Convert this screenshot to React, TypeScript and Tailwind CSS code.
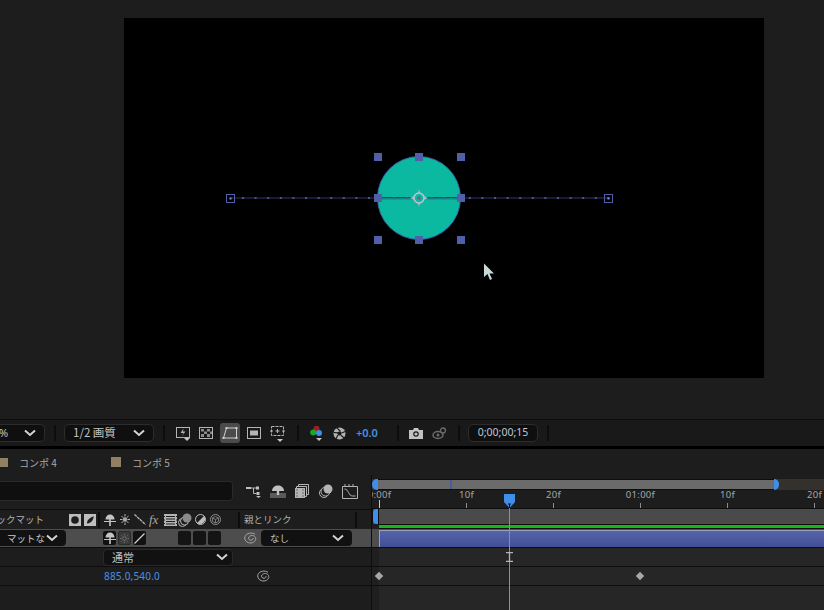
import type { ReactNode } from 'react';

const jp = "font-['Noto_Sans_CJK_JP','Noto_Sans',sans-serif]";

function Chevron({ className = '' }: { className?: string }) {
    return (
        <svg viewBox="0 0 12 8" className={`w-[12px] h-[8px] ${className}`} fill="none" stroke="#d4d4d4" strokeWidth="2">
            <path d="M1 1.5 6 6l5-4.5" />
        </svg>
    );
}

function Sep({ className = '' }: { className?: string }) {
    return <div className={`w-[2px] h-[16px] bg-[#0d0d0d] shrink-0 ${className}`} />;
}

function Icon({ w, h, children, className = '' }: { w: number; h: number; children: ReactNode; className?: string }) {
    return (
        <svg width={w} height={h} viewBox={`0 0 ${w} ${h}`} className={`shrink-0 ${className}`} fill="none" stroke="#b4b4b4">
            {children}
        </svg>
    );
}

function Spiral({ className = '' }: { className?: string }) {
    return (
        <Icon w={13} h={12} className={className}>
            <path d="M11 2.200C8 .3 2.500 .8 1 4.500c-1.200 3.500 2 6.800 6 6.500 3.500-.3 5.500-3 4.500-5.500C10.500 3 6.500 2.800 4.800 5c-1 1.800.5 3.500 2.500 3.200 1.300-.2 2-1.200 1.700-2.200" stroke="#a8a8a8" strokeWidth="1" />
        </Icon>
    );
}

function Caret() {
    return <path d="M0 0h6L3 3z" fill="#c8c8c8" stroke="none" />;
}

function Toolbar() {
    return (
        <div className="h-[26px] bg-[#191919] flex items-center shrink-0 text-[#c4c4c4]">
            <div className="w-[45px] h-[18px] rounded-r-[5px] bg-[#0f0f0f] border border-l-0 border-[#2c2c2c] flex items-center justify-between pr-[8px] text-[11px]">
                <span className="font-['Noto_Sans',sans-serif] -ml-[1px]">%</span>
                <Chevron />
            </div>
            <Sep className="ml-[9px]" />
            <div className={`w-[90px] h-[18px] ml-[8px] rounded-[5px] bg-[#0f0f0f] border border-[#2c2c2c] flex items-center justify-between pl-[8px] pr-[8px] text-[11.5px] whitespace-nowrap ${jp}`}>
                <span>1/2 画質</span>
                <Chevron />
            </div>
            <Sep className="ml-[9px]" />
            <Icon w={16} h={16} className="ml-[10px]">
                <rect x="1.500" y="2.500" width="13" height="10" />
                <path d="M8.500 3.500 5.500 8h3l-2 3.500 4-5H8z" fill="#b4b4b4" stroke="none" />
                <g transform="translate(9 13)"><Caret /></g>
            </Icon>
            <Icon w={14} h={13} className="ml-[8px]">
                <rect x=".5" y=".5" width="13" height="11" />
                <path d="M2 2h3v2.500H2zM8 2h3v2.500H8zM5 4.500h3V7H5zM11 4.500h2V7h-2zM2 7h3v3H2zM8 7h3v3H8z" fill="#8c8c8c" stroke="none" />
            </Icon>
            <div className="w-[20px] h-[20px] ml-[7px] rounded-[3px] bg-[#4b4b4b] flex items-center justify-center">
                <Icon w={16} h={14}>
                    <path d="M4.500 2H14.500V12H1.500z" stroke="#cfcfcf" />
                    <path d="M3.500 1h2v2h-2zM13.500 1h2v2h-2zM.5 11h2v2h-2zM13.500 11h2v2h-2z" fill="#cfcfcf" stroke="none" />
                </Icon>
            </div>
            <Icon w={14} h={12} className="ml-[7px]">
                <rect x=".5" y=".5" width="13" height="11" />
                <rect x="3" y="3.500" width="8" height="5" fill="#b4b4b4" stroke="none" />
            </Icon>
            <Icon w={15} h={17} className="ml-[9px]">
                <rect x="1.500" y="1.500" width="12" height="9" strokeDasharray="3 1" />
                <path d="M7.500 4v4M5.500 6h4M0 6h3M12 6h3" />
                <g transform="translate(7 14)"><Caret /></g>
            </Icon>
            <Sep className="ml-[12px]" />
            <Icon w={13} h={16} className="ml-[11px]">
                <circle cx="6.500" cy="3.800" r="3" fill="#a01d1d" stroke="none" />
                <circle cx="3.200" cy="7.500" r="3" fill="#18a82a" stroke="none" />
                <circle cx="9" cy="8" r="3" fill="#3d8fe0" stroke="none" />
                <g transform="translate(6 13)"><Caret /></g>
            </Icon>
            <Icon w={13} h={13} className="ml-[10px]">
                <circle cx="6.500" cy="6.500" r="6" fill="#b4b4b4" stroke="none" />
                <path d="M4 .8 7.500 4.500M12.300 4.500 8.500 6M11 10.800 7.800 8.300M3 11.700 5 8M.6 5.500 5 5.800" stroke="#191919" strokeWidth="1.200" />
                <circle cx="6.500" cy="6.500" r="2" fill="#191919" stroke="none" />
            </Icon>
            <span className="ml-[10px] w-[21px] whitespace-nowrap text-[11px] font-semibold text-[#4a90e2] font-['Noto_Sans',sans-serif]">+0.0</span>
            <Sep className="ml-[20px]" />
            <Icon w={14} h={11} className="ml-[10px]">
                <path d="M0 2h4l1-2h4l1 2h4v9H0z" fill="#c2c2c2" stroke="none" />
                <circle cx="7" cy="6" r="2.200" fill="#c2c2c2" stroke="#191919" strokeWidth="1.200" />
            </Icon>
            <Icon w={15} h={13} className="ml-[9px]">
                <ellipse cx="6" cy="8" rx="5" ry="3.500" stroke="#6b6b6b" strokeWidth="1.500" />
                <circle cx="6" cy="8" r="1.500" fill="#6b6b6b" stroke="none" />
                <circle cx="11" cy="3.500" r="2.500" stroke="#6b6b6b" strokeWidth="1.300" />
            </Icon>
            <Sep className="ml-[11px]" />
            <div className="w-[70px] h-[18px] ml-[8px] rounded-[5px] bg-[#0f0f0f] border border-[#2c2c2c] flex items-center justify-center text-[10.500px] text-[#bfc6d6] font-['Noto_Sans',sans-serif]">
                0;00;00;15
            </div>
            <Sep className="ml-[9px]" />
        </div>
    );
}

function Tabs() {
    return (
        <div className={`h-[26px] flex items-center text-[10px] text-[#a8a8a8] shrink-0 ${jp}`}>
            <div className="w-[8px] h-[9px] bg-[#8f7f63]" />
            <span className="ml-[11px] w-[37px] whitespace-nowrap">コンポ 4</span>
            <div className="w-[10px] h-[10px] ml-[55px] bg-[#8f7f63]" />
            <span className="ml-[11px] whitespace-nowrap">コンポ 5</span>
        </div>
    );
}

function SearchRow() {
    return (
        <div className="h-[34px] pb-[2px] flex items-center shrink-0">
            <div className="w-[233px] h-[20px] rounded-r-[4px] bg-[#0f0f0f] border border-l-0 border-[#2a2a2a]" />
            <Icon w={16} h={14} className="ml-[13px]">
                <path d="M0 3h5v2H0z" fill="#c0c0c0" stroke="none" />
                <path d="M5 4h5M7.500 4v5.500h3" />
                <path d="M10 2.500h3v3h-3zM10.500 8h3v3h-3z" fill="#c0c0c0" stroke="none" />
                <g transform="translate(10 12)"><path d="M0 0h5L2.500 2z" fill="#c0c0c0" stroke="none" /></g>
            </Icon>
            <Icon w={16} h={13} className="ml-[8px]">
                <path d="M2 6C2 2.500 5 .5 8 .5S14 2.500 14 6z" fill="#c0c0c0" stroke="none" />
                <path d="M6.800 6h2.400v3H6.800z" fill="#c0c0c0" stroke="none" />
                <path d="M0 8h16v5H0z" fill="#5a5a5a" stroke="none" />
                <path d="M6.800 8h2.400v2H6.800z" fill="#c0c0c0" stroke="none" />
            </Icon>
            <Icon w={14} h={14} className="ml-[9px]">
                <path d="M3.500 2.500V.5h10v10h-2" />
                <path d="M1.500 4.500V2.500h10v10h-2" />
                <rect x="0" y="4" width="10" height="10" fill="#b4b4b4" stroke="none" />
                <path d="M1.500 5.500h1v1h-1zM1.500 8.500h1v1h-1zM1.500 11.500h1v1h-1zM7.500 5.500h1v1h-1zM7.500 8.500h1v1h-1zM7.500 11.500h1v1h-1z" fill="#1d1d1d" stroke="none" />
            </Icon>
            <Icon w={14} h={14} className="ml-[10px]">
                <circle cx="5" cy="9" r="4.500" />
                <circle cx="6.500" cy="7.500" r="4.500" fill="#1d1d1d" />
                <circle cx="9" cy="5" r="4.500" fill="#b4b4b4" stroke="none" />
            </Icon>
            <Icon w={16} h={15} className="ml-[9px]">
                <path d="M.5 2.500h15v12H.5z" />
                <path d="M3 0v2.500M7 0v2.500M11 0v2.500" />
                <path d="M2.500 5c4 0 4 7 8 7h3" />
            </Icon>
        </div>
    );
}

function ShyIcon({ className = '' }: { className?: string }) {
    return (
        <Icon w={12} h={12} className={className}>
            <path d="M1.500 5.500C1.500 2.500 3.500 .5 6 .5s4.500 2 4.500 5z" fill="#c4c4c4" stroke="none" />
            <path d="M5.200 5h1.600v7H5.200z" fill="#c4c4c4" stroke="none" />
            <path d="M0 7.500h12" stroke="#c4c4c4" />
        </Icon>
    );
}

function HeaderIcons() {
    return (
        <>
            <Icon w={12} h={12} className="ml-[25px]">
                <rect width="12" height="12" fill="#bdbdbd" stroke="none" />
                <circle cx="6" cy="6" r="3.800" fill="#1d1d1d" stroke="none" />
            </Icon>
            <Icon w={12} h={12} className="ml-[3px]">
                <rect width="12" height="12" fill="#bdbdbd" stroke="none" />
                <path d="M3 9.500C3 5.500 6.500 3 10 2.500 9 5 8.500 9 3 9.500z" fill="#1d1d1d" stroke="none" />
            </Icon>
            <Sep className="ml-[2px] h-[12px]" />
            <ShyIcon className="ml-[4px]" />
            <Icon w={10} h={11} className="ml-[4px]">
                <circle cx="5" cy="5.500" r="2.200" fill="#a8a8a8" stroke="none" />
                <path d="M5 0v2.500M5 8.500V11M0 5.500h2.500M7.500 5.500H10M1.500 2l1.800 1.800M8.500 2 6.700 3.800M1.500 9l1.800-1.800M8.500 9 6.700 7.200" />
            </Icon>
            <Icon w={12} h={11} className="ml-[4px]">
                <path d="M.5 .5 11.500 10.500" strokeWidth="1.300" strokeDasharray="3 .6" />
            </Icon>
            <span className="ml-[3px] w-[12px] text-[13px] leading-none italic text-[#a8a8a8] font-['Liberation_Serif',serif]">fx</span>
            <Icon w={13} h={12} className="ml-[3px]">
                <rect width="13" height="12" fill="#b4b4b4" stroke="none" />
                <path d="M2 2.500h9M2 5h9M2 7.500h9M2 10h9" stroke="#1d1d1d" />
                <path d="M0 2.500h1M12 2.500h1M0 6h1M12 6h1M0 9.500h1M12 9.500h1" stroke="#1d1d1d" />
            </Icon>
            <Icon w={14} h={14} className="ml-[1px]">
                <circle cx="4.500" cy="9.500" r="4" />
                <circle cx="6.500" cy="8" r="4" fill="#1d1d1d" />
                <circle cx="9" cy="5" r="4.500" fill="#8a8a8a" stroke="none" />
            </Icon>
            <Icon w={11} h={11} className="ml-[3px]">
                <circle cx="5.500" cy="5.500" r="5" fill="#1d1d1d" stroke="#bdbdbd" />
                <path d="M9 2 2 9a5 5 0 0 0 7-7z" fill="#bdbdbd" stroke="none" />
            </Icon>
            <Icon w={11} h={11} className="ml-[4px]">
                <circle cx="5.500" cy="5.500" r="5" stroke="#8f8f8f" />
                <path d="M2.500 4 5.500 2.500 8.500 4 5.500 5.500zM2.500 4v3.500l3 1.500 3-1.500V4M5.500 5.500V9" stroke="#8f8f8f" strokeWidth=".8" />
            </Icon>
        </>
    );
}

function LeftColumn() {
    return (
        <div className="w-[371px] shrink-0 flex flex-col">
            <SearchRow />
            <div className="h-[1px] bg-[#0d0d0d]" />
            <div className={`h-[19px] flex items-center text-[9.500px] text-[#b0b0b0] ${jp}`}>
                <span className="w-[44px] flex justify-end overflow-hidden whitespace-nowrap"><span className="shrink-0">ックマット</span></span>
                <HeaderIcons />
                <Sep className="ml-[17px] h-[12px]" />
                <span className="ml-[4px] w-[47px] whitespace-nowrap">親とリンク</span>
                <Sep className="ml-[64px] h-[12px]" />
            </div>
            <div className="h-[18px] bg-[#4d4d4d] flex items-center">
                <div className={`w-[66px] h-[16px] rounded-r-[4px] bg-[#111111] flex items-center justify-between pl-[7px] pr-[8px] text-[9.500px] whitespace-nowrap text-[#c8c8c8] ${jp}`}>
                    <span>マットな</span>
                    <Chevron className="w-[10px]" />
                </div>
                <div className="ml-[37px] w-[13px] h-[14px] rounded-[2px] bg-[#111111] flex items-center justify-center">
                    <ShyIcon />
                </div>
                <div className="ml-[2px] w-[13px] h-[14px] rounded-[2px] bg-[#3a3a3a] border border-[#2a2a2a] flex items-center justify-center">
                    <Icon w={9} h={9}>
                        <circle cx="4.500" cy="4.500" r="1.800" stroke="#6e6e6e" />
                        <path d="M4.500 0v1.500M4.500 7.500V9M0 4.500h1.500M7.500 4.500H9M1.300 1.300l1 1M7.700 1.300l-1 1M1.300 7.700l1-1M7.700 7.700l-1-1" stroke="#6e6e6e" />
                    </Icon>
                </div>
                <div className="ml-[2px] w-[13px] h-[14px] rounded-[2px] bg-[#111111] flex items-center justify-center">
                    <Icon w={11} h={11}>
                        <path d="M.5 10.500 10.500 .5" stroke="#d0d0d0" strokeWidth="1.200" />
                    </Icon>
                </div>
                <div className="ml-[32px] w-[13px] h-[14px] rounded-[2px] bg-[#141414]" />
                <div className="ml-[2px] w-[13px] h-[14px] rounded-[2px] bg-[#141414]" />
                <div className="ml-[2px] w-[13px] h-[14px] rounded-[2px] bg-[#141414]" />
                <Spiral className="ml-[23px]" />
                <div className={`ml-[4px] w-[91px] h-[16px] rounded-[4px] bg-[#111111] flex items-center justify-between pl-[9px] pr-[8px] text-[9.500px] text-[#c8c8c8] ${jp}`}>
                    <span>なし</span>
                    <Chevron className="w-[10px]" />
                </div>
            </div>
            <div className="h-[1px] bg-[#0d0d0d]" />
            <div className="h-[18px] flex items-center pl-[103px]">
                <div className={`w-[130px] h-[17px] rounded-[4px] bg-[#111111] border border-[#2a2a2a] flex items-center justify-between pl-[8px] pr-[4px] text-[11px] text-[#c0c0c0] ${jp}`}>
                    <span>通常</span>
                    <Chevron className="w-[10px]" />
                </div>
            </div>
            <div className="h-[1px] bg-[#0d0d0d]" />
            <div className="h-[18px] flex items-center">
                <span className="ml-[104px] w-[59px] text-[10px] tracking-[0.2px] text-[#4a90e2] font-['Noto_Sans',sans-serif]">885.0,540.0</span>
                <Spiral className="ml-[94px]" />
            </div>
            <div className="h-[1px] bg-[#0d0d0d]" />
        </div>
    );
}

const ticks = ['0:00f', '10f', '20f', '01:00f', '10f', '20f'];

function Keyframe({ className = '' }: { className?: string }) {
    return <div className={`w-[6px] h-[6px] rotate-45 bg-[#a6a6a6] shrink-0 ${className}`} />;
}

function RightColumn() {
    return (
        <div className="flex-1 flex flex-col relative overflow-hidden bg-[#1d1d1d]">
            <div className="h-[4px] shrink-0" />
            {/* navigator */}
            <div className="h-[11px] flex items-stretch bg-[#34312d] shrink-0">
                <div className="w-[6px] bg-[#3f8fe8] rounded-l-[5px]" />
                <div className="w-[396px] bg-[#6b6b6b] border-y border-[#0d0d0d] flex">
                    <div className="ml-[72px] w-[2px] bg-[#4a5a9a]" />
                </div>
                <div className="w-[5px] bg-[#3f8fe8] rounded-r-[5px]" />
            </div>
            {/* ruler */}
            <div className="h-[18px] flex -ml-[36px] shrink-0 text-[9.500px] text-[#a6a6a6] font-['Noto_Sans',sans-serif]">
                {ticks.map((t, i) => (
                    <div key={i} className="w-[87px] shrink-0 flex flex-col items-center justify-between">
                        <span className="leading-[10px] tracking-[0.3px]">{t}</span>
                        <div className={`w-[1px] ${i === 0 ? 'h-[8px] bg-[#c8c8c8]' : 'h-[5px] bg-[#8c8c8c]'}`} />
                    </div>
                ))}
            </div>
            <div className="h-[1px] bg-[#0d0d0d] shrink-0" />
            {/* work area */}
            <div className="h-[15px] flex bg-[#4a4a4a] shrink-0">
                <div className="w-[1px] bg-[#0d0d0d]" />
                <div className="w-[5px] bg-[#3f8fe8] rounded-l-[4px]" />
                <div className="w-[1px] bg-[#0d0d0d]" />
            </div>
            <div className="h-[5px] flex shrink-0">
                <div className="w-[7px]" />
                <div className="flex-1 bg-[#18b41e] border-y border-[#0d0d0d]" />
            </div>
            <div className="h-[18px] flex bg-[#4d4d4d] pt-[1px] shrink-0">
                <div className="w-[7px]" />
                <div className="flex-1 bg-linear-to-b from-[#5563ab] to-[#424f97] border-l border-t border-[#9aa0b8]" />
            </div>
            <div className="h-[1px] bg-[#0d0d0d] shrink-0" />
            <div className="h-[18px] flex items-center bg-[#262626] shrink-0">
                <div className="w-[7px] h-full bg-[#1f1f1f]" />
            </div>
            <div className="h-[1px] bg-[#0d0d0d] shrink-0" />
            <div className="h-[18px] flex items-center bg-[#262626] shrink-0">
                <div className="w-[7px] h-full bg-[#1f1f1f]" />
                <Keyframe className="-ml-[3px]" />
                <Keyframe className="ml-[255px]" />
            </div>
            <div className="h-[1px] bg-[#0d0d0d] shrink-0" />
            <div className="flex-1 flex bg-[#262626]">
                <div className="w-[7px] bg-[#1f1f1f]" />
            </div>
            {/* playhead sits over the rows */}
            <div className="absolute left-[132px] top-[19px] bottom-0 w-[11px] flex flex-col items-center">
                <svg width="11" height="14" viewBox="0 0 11 14" className="shrink-0">
                    <path d="M0 0h11v8l-5.500 6L0 8z" fill="#3f8fe8" />
                    <path d="M4 10h3M5.500 10v4" stroke="#0d0d0d" />
                </svg>
                <div className="w-[1px] flex-1 bg-[#5f9bd8]" />
            </div>
            {/* mouse cursor */}
            <svg width="7" height="10" viewBox="0 0 7 10" className="absolute left-[134px] top-[77px]" fill="none" stroke="#b4b4b4">
                <path d="M0 .5h7M0 9.500h7M3.500 .5v9" strokeWidth="1.300" />
            </svg>
        </div>
    );
}

function CompViewer() {
    const handles = [
        [254, 139],
        [295, 139],
        [337, 139],
        [254, 180],
        [337, 180],
        [254, 222],
        [295, 222],
        [337, 222],
    ];
    const dots = Array.from({ length: 30 }, (_, i) => 118 + i * 12.6);
    return (
        <div className="h-[419px] shrink-0 pl-[124px] pt-[18px]">
            <svg width="640" height="360" viewBox="0 0 640 360" className="bg-black block">
                <circle cx="295" cy="180" r="41.500" fill="#0bb8a0" stroke="#3f5fa8" strokeWidth="1" />
                <path d="M106 180H484" stroke="#1a1a33" strokeWidth="2" />
                <path d="M254 180.500H336" stroke="#0a8a84" strokeWidth="2" />
                {dots.map((x) => (
                    <rect key={x} x={x} y="179" width="2" height="2" fill="#4a5590" />
                ))}
                <rect x="102.500" y="176.500" width="8" height="8" fill="none" stroke="#4f5fa8" />
                <rect x="105.500" y="179.500" width="2" height="2" fill="#7f8fd0" />
                <rect x="480.500" y="176.500" width="8" height="8" fill="none" stroke="#4f5fa8" />
                <rect x="483.500" y="179.500" width="2" height="2" fill="#7f8fd0" />
                {handles.map(([x, y]) => (
                    <rect key={`${x}-${y}`} x={x - 4} y={y - 4} width="8" height="8" fill="#4f5fa8" />
                ))}
                <path d="M295 171l1.500 5 7.500 4-7.500 4-1.500 5-1.500-5-7.500-4 7.500-4z" fill="#a8acbc" />
                <circle cx="295" cy="180" r="5" fill="#0bb8a0" stroke="#c4c6d2" strokeWidth="1.400" />
                <circle cx="295" cy="180" r="1.800" fill="#5a6a98" />
                <path d="M360 245.500V259l3.500-3 2.500 6 2-1-2.500-5.500H370z" fill="#c8d8d8" />
            </svg>
        </div>
    );
}

export default function App() {
    return (
        <div className="w-[824px] h-[610px] overflow-hidden bg-[#1d1d1d] flex flex-col">
            <CompViewer />
            <div className="h-[1px] bg-[#0d0d0d] shrink-0" />
            <Toolbar />
            <div className="h-[3px] bg-black shrink-0" />
            <Tabs />
            <div className="flex-1 flex min-h-0">
                <LeftColumn />
                <div className="w-[1px] bg-[#0d0d0d] shrink-0" />
                <RightColumn />
            </div>
        </div>
    );
}
